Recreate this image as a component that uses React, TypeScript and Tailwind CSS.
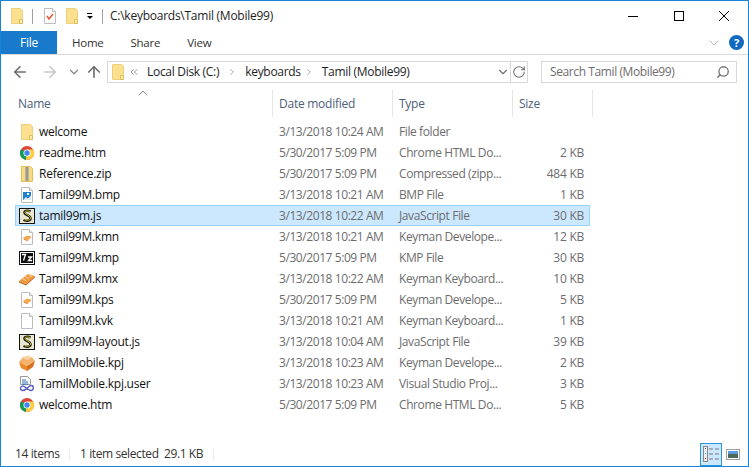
import React from 'react';
import { ArrowLeft, ArrowRight, ArrowUp, ChevronDown, ChevronRight, ChevronUp, ChevronsLeft, RotateCw, Search } from 'lucide-react';

type IconKind = 'folder' | 'chrome' | 'zip' | 'bmp' | 'js' | 'kmn' | 'kmp' | 'kmx' | 'kps' | 'kvk' | 'kpj' | 'user';

interface FileRow {
  name: string;
  date: string;
  type: string;
  size: string;
  icon: IconKind;
  selected?: boolean;
}

const FILES: FileRow[] = [
  { name: 'welcome', date: '3/13/2018 10:24 AM', type: 'File folder', size: '', icon: 'folder' },
  { name: 'readme.htm', date: '5/30/2017 5:09 PM', type: 'Chrome HTML Do...', size: '2 KB', icon: 'chrome' },
  { name: 'Reference.zip', date: '5/30/2017 5:09 PM', type: 'Compressed (zipp...', size: '484 KB', icon: 'zip' },
  { name: 'Tamil99M.bmp', date: '3/13/2018 10:21 AM', type: 'BMP File', size: '1 KB', icon: 'bmp' },
  { name: 'tamil99m.js', date: '3/13/2018 10:22 AM', type: 'JavaScript File', size: '30 KB', icon: 'js', selected: true },
  { name: 'Tamil99M.kmn', date: '3/13/2018 10:21 AM', type: 'Keyman Develope...', size: '12 KB', icon: 'kmn' },
  { name: 'Tamil99M.kmp', date: '5/30/2017 5:09 PM', type: 'KMP File', size: '30 KB', icon: 'kmp' },
  { name: 'Tamil99M.kmx', date: '3/13/2018 10:22 AM', type: 'Keyman Keyboard...', size: '10 KB', icon: 'kmx' },
  { name: 'Tamil99M.kps', date: '5/30/2017 5:09 PM', type: 'Keyman Develope...', size: '5 KB', icon: 'kps' },
  { name: 'Tamil99M.kvk', date: '3/13/2018 10:21 AM', type: 'Keyman Keyboard...', size: '1 KB', icon: 'kvk' },
  { name: 'Tamil99M-layout.js', date: '3/13/2018 10:04 AM', type: 'JavaScript File', size: '39 KB', icon: 'js' },
  { name: 'TamilMobile.kpj', date: '3/13/2018 10:23 AM', type: 'Keyman Develope...', size: '2 KB', icon: 'kpj' },
  { name: 'TamilMobile.kpj.user', date: '3/13/2018 10:23 AM', type: 'Visual Studio Proj...', size: '3 KB', icon: 'user' },
  { name: 'welcome.htm', date: '5/30/2017 5:09 PM', type: 'Chrome HTML Do...', size: '5 KB', icon: 'chrome' },
];

const FolderIcon = () => (
  <svg width="16" height="16" viewBox="0 0 16 16">
    <path d="M2.5 .5h9l2 2v13h-11z" fill="#fbe08f" stroke="#ecd07c" />
    <path d="M10.5 11.5h3v4h-3z" fill="#f8ebb8" stroke="#e3bd55" />
  </svg>
);

const DocShape = ({ children }: { children?: React.ReactNode }) => (
  <svg width="16" height="16" viewBox="0 0 16 16">
    <path d="M2.5 .5h8l3 3v12h-11z" fill="#fff" stroke="#bdbdbd" />
    <path d="M10.5 .5v3h3" fill="#eee" stroke="#bdbdbd" />
    {children}
  </svg>
);

const KeymanChunk = () => (
  <>
    <path d="M4 9l4-2.5 4 1-1 2-3 1.5z" fill="#f7a648" />
    <path d="M4 9l4 2 3-1 1-2.5v1.500l-4 3-3-1.500z" fill="#dd6f1b" />
  </>
);

const JsIcon = () => (
  <svg width="16" height="16" viewBox="0 0 16 16">
    <rect x=".5" y=".5" width="15" height="15" fill="#e9e7d2" stroke="#111" />
    <path d="M11.5 3.5c-3-1.5-6.5-.5-6 1.500s5.500 2.500 6 5-3.500 3.500-7 2" fill="none" stroke="#111" strokeWidth="2.4" />
    <path d="M11 3.5c-3-1-5.500-.5-5 1.300s5 2.400 5.500 4.900-3 3-6 2" fill="none" stroke="#f0dc2a" strokeWidth=".9" />
  </svg>
);

const FileIcon = ({ kind }: { kind: IconKind }) => {
  switch (kind) {
    case 'folder':
      return <FolderIcon />;
    case 'chrome':
      return (
        <svg width="16" height="16" viewBox="0 0 16 16">
          <circle cx="8" cy="8" r="7" fill="#db4437" />
          <path d="M8 8L2 4.300A7 7 0 0 0 7 14.900z" fill="#0f9d58" />
          <path d="M8 4.500h6.300a7 7 0 0 1-7.300 10.400z" fill="#ffcd40" />
          <circle cx="8" cy="8" r="3.500" fill="#fff" />
          <circle cx="8" cy="8" r="2.700" fill="#4285f4" />
        </svg>
      );
    case 'zip':
      return (
        <svg width="16" height="16" viewBox="0 0 16 16">
          <path d="M2.5 .5h9l2 2v13h-11z" fill="#fbdc7c" stroke="#e3bd55" />
          <rect x="6" y="1" width="4" height="14" fill="#cfcfc6" />
          <path d="M6.500 2h3M6.500 4h3M6.500 6h3M6.500 8h3M6.500 10h3M6.500 12h3M6.500 14h3" stroke="#66665f" />
        </svg>
      );
    case 'bmp':
      return (
        <DocShape>
          <rect x="4" y="5" width="8" height="8" fill="#1f7fd0" />
          <path d="M4 13l3-3 2 1.500 3-3v4.500z" fill="#d7ecfa" />
          <rect x="8" y="6" width="2" height="2" fill="#fff" />
        </DocShape>
      );
    case 'js':
      return <JsIcon />;
    case 'kmn':
    case 'kps':
      return (
        <DocShape>
          <KeymanChunk />
        </DocShape>
      );
    case 'kmp':
      return (
        <svg width="16" height="16" viewBox="0 0 16 16">
          <rect x=".5" y="1.500" width="15" height="13" fill="#fff" stroke="#111" />
          <rect x="2" y="3" width="12" height="10" fill="#111" />
          <path d="M3 4.500h3.500l-2 6M9 7h3.500l-3 3.500h3.500" fill="none" stroke="#fff" strokeWidth="1.3" />
        </svg>
      );
    case 'kmx':
      return (
        <svg width="16" height="16" viewBox="0 0 16 16">
          <path d="M0 10l9-7 7 2-9 8z" fill="#ef9a3f" />
          <path d="M0 10l7 3v1.500l-7-3zM7 13l9-8v1.500l-9 8z" fill="#c56d1c" />
          <path d="M4 8l3 1.500M7 6l3 1.500M10 4.500l3 1.200" stroke="#fbd9a8" />
        </svg>
      );
    case 'kvk':
      return <DocShape />;
    case 'kpj':
      return (
        <svg width="16" height="16" viewBox="0 0 16 16">
          <path d="M0 7l8 4 8-5-3-4-5 3-4-3z" fill="#f6b26b" />
          <path d="M4 2l4 3 5-3-4-1.500z" fill="#fbd3a0" />
          <path d="M0 7l8 4v5l-6-3z" fill="#ef8a2b" />
          <path d="M8 11l8-5-2 6-6 4z" fill="#d5701c" />
        </svg>
      );
    case 'user':
      return (
        <svg width="16" height="16" viewBox="0 0 16 16">
          <path d="M1.500 .5h7l3 3v5h-10z" fill="#fff" stroke="#9a9a9a" />
          <path d="M3 4h4M3 6h6M3 8h6" stroke="#2f6db5" />
          <path d="M1.500 12.500c0-3 3-3 5-1s3.500 3.500 6 3 2.500-5 0-5-3.500 2.500-6 4-5 1-5-1z" fill="none" stroke="#5a61c4" strokeWidth="1.5" />
        </svg>
      );
    default:
      return null;
  }
};

const Divider = () => <div className="w-px h-[15px] bg-[#a0a0a0]" />;

const App: React.FC = () => {
  return (
    <div className="w-[749px] h-[467px] bg-white border border-[#1883d7] flex flex-col overflow-hidden text-[12px] leading-[16px] text-[#1e1e1e] font-['Open_Sans','Noto_Sans',sans-serif] tracking-[-0.25px]">
      {/* Title bar */}
      <div className="h-[30px] flex items-center shrink-0">
        <div className="ml-[8px]"><FolderIcon /></div>
        <div className="ml-[7px]"><Divider /></div>
        <div className="ml-[9px]">
          <DocShape>
            <path d="M5 8l2 3 4-5" fill="none" stroke="#e2572b" strokeWidth="1.5" />
          </DocShape>
        </div>
        <div className="ml-[6px]"><FolderIcon /></div>
        <div className="ml-[6px] flex flex-col items-center gap-[2px] w-[7px]">
          <div className="w-[5px] h-px bg-black" />
          <div className="w-0 h-0 border-x-[3px] border-x-transparent border-t-[3px] border-t-black" />
        </div>
        <div className="ml-[9px]"><Divider /></div>
        <span className="ml-[7px]">C:\keyboards\Tamil (Mobile99)</span>
        <div className="ml-auto flex items-center mr-[2px]">
          <div className="w-[46px] flex justify-center"><div className="w-[10px] h-px bg-black" /></div>
          <div className="w-[45px] flex justify-center"><div className="w-[10px] h-[10px] border border-black" /></div>
          <div className="w-[45px] flex justify-center">
            <svg width="10" height="10" viewBox="0 0 10 10">
              <path d="M0 0l10 10M10 0L0 10" stroke="#000" strokeWidth="1" />
            </svg>
          </div>
        </div>
      </div>

      {/* Ribbon tabs */}
      <div className="h-[24px] flex items-stretch border-b border-[#dadbdc] shrink-0">
        <div className="w-[56px] h-[23px] bg-[#1979ca] text-white flex items-center justify-center">File</div>
        <div className="flex items-center ml-[15px] gap-[27px] text-[#333] text-[11.5px]">
          <span>Home</span>
          <span>Share</span>
          <span>View</span>
        </div>
        <div className="ml-auto flex items-center mr-[4px] gap-[7px]">
          <ChevronDown size={16} strokeWidth={1.2} color="#a8a8a8" />
          <div className="w-[15px] h-[15px] rounded-full bg-[#1169c0] text-white flex items-center justify-center text-[11px] font-bold">?</div>
        </div>
      </div>

      {/* Navigation bar */}
      <div className="h-[34px] flex items-center shrink-0">
        <div className="flex items-center w-[106px] pl-[10px]">
          <ArrowLeft size={18} strokeWidth={2.2} color="#6d6d6d" />
          <ArrowRight size={18} strokeWidth={2.2} color="#c8c8c8" className="ml-[12px]" />
          <ChevronDown size={14} strokeWidth={2.2} color="#8a8a8a" className="ml-[8px]" />
          <ArrowUp size={18} strokeWidth={2.2} color="#6d6d6d" className="ml-[4px]" />
        </div>
        <div className="w-[421px] h-[22px] border border-[#d9d9d9] flex items-center tracking-[-0.3px]">
          <div className="ml-[2px]"><FolderIcon /></div>
          <ChevronsLeft size={12} strokeWidth={1.5} color="#777" className="ml-[2px]" />
          <span className="ml-[7px]">Local Disk (C:)</span>
          <ChevronRight size={10} strokeWidth={1.5} color="#777" className="ml-[8px]" />
          <span className="ml-[8px]">keyboards</span>
          <ChevronRight size={10} strokeWidth={1.5} color="#777" className="ml-[3px]" />
          <span className="ml-[8px]">Tamil (Mobile99)</span>
          <ChevronDown size={14} strokeWidth={2} color="#707070" className="ml-auto" />
          <div className="w-[17px] h-full border-l border-[#d9d9d9] flex items-center justify-center">
            <RotateCw size={14} strokeWidth={1.8} color="#707070" />
          </div>
        </div>
        <div className="ml-[13px] w-[196px] h-[22px] border border-[#d9d9d9] flex items-center pl-[8px] pr-[6px] text-[#6d6d6d] tracking-[-0.4px]">
          <span>Search Tamil (Mobile99)</span>
          <Search size={14} strokeWidth={2.2} color="#707070" className="ml-auto -scale-x-100" />
        </div>
      </div>

      {/* Column headers */}
      <div className="relative mt-[1px] h-[27px] flex items-stretch pl-[14px] text-[#4c607a] shrink-0">
        <ChevronUp size={16} strokeWidth={1.3} color="#777" className="absolute left-[134px] top-[-5px]" />
        <div className="w-[258px] border-r border-[#e5e5e5] pl-[3px] flex items-center">Name</div>
        <div className="w-[120px] border-r border-[#e5e5e5] pl-[6px] flex items-center">Date modified</div>
        <div className="w-[120px] border-r border-[#e5e5e5] pl-[6px] flex items-center">Type</div>
        <div className="w-[80px] border-r border-[#e5e5e5] pl-[6px] flex items-center">Size</div>
      </div>

      {/* File rows */}
      <div className="flex-1 flex flex-col pt-[4px] pl-[14px]">
        {FILES.map((file) => (
          <div
            key={file.name}
            className={`w-[575px] h-[21px] flex items-center shrink-0 border ${file.selected ? 'bg-[#cce8ff] border-[#99d1ff]' : 'border-transparent'}`}
          >
            <div className="w-[256px] flex items-center pl-[3px]">
              <FileIcon kind={file.icon} />
              <span className="ml-[4px] text-[#111]">{file.name}</span>
            </div>
            <span className="w-[120px] pl-[7px] text-[#6d6d6d] tracking-[-0.42px]">{file.date}</span>
            <span className="w-[120px] pl-[7px] text-[#6d6d6d] tracking-[-0.4px]">{file.type}</span>
            <span className="w-[72px] text-right text-[#6d6d6d]">{file.size}</span>
          </div>
        ))}
      </div>

      {/* Status bar */}
      <div className="h-[22px] flex items-center shrink-0 text-[#333] mb-[1px] tracking-[-0.4px]">
        <span className="ml-[14px] w-[54px]">14 items</span>
        <div className="w-px h-[12px] bg-[#ececec]" />
        <span className="ml-[10px] w-[133px]">1 item selected&nbsp; 29.1 KB</span>
        <div className="w-px h-[12px] bg-[#ececec]" />
        <div className="ml-auto mr-[8px] flex items-center">
          <div className="w-[22px] h-[23px] bg-[#cce8ff] border border-[#2a95df] flex items-center justify-center">
            <svg width="16" height="16" viewBox="0 0 16 16">
              <rect x=".5" y=".5" width="4" height="15" fill="#eee" stroke="#888" />
              <rect x="2" y="2" width="1" height="1" fill="#555" />
              <rect x="2" y="7" width="1" height="1" fill="#2a95df" />
              <rect x="2" y="12" width="1" height="1" fill="#c33" />
              <path d="M6 3h4M12 3h4M6 8h4M12 8h4M6 13h4M12 13h4" stroke="#777" />
            </svg>
          </div>
          <div className="ml-[4px]">
            <svg width="14" height="11" viewBox="0 0 14 11">
              <rect x=".5" y=".5" width="13" height="10" fill="#fff" stroke="#a0a0a0" />
              <rect x="2" y="2" width="10" height="3" fill="#5a9be0" />
              <rect x="2" y="5" width="10" height="4" fill="#4d6a58" />
            </svg>
          </div>
        </div>
      </div>
    </div>
  );
};

export default App;
